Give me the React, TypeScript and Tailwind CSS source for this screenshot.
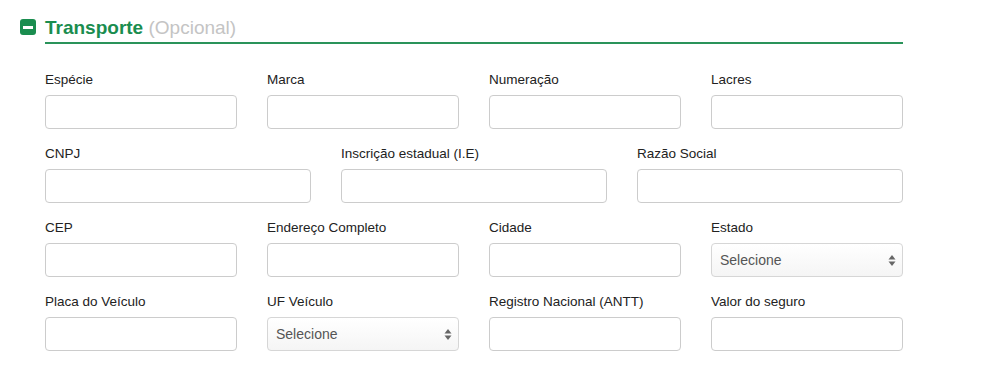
import React from "react";

interface Field {
  label: string;
  type?: "text" | "select";
}

const rows: Field[][] = [
  [{ label: "Espécie" }, { label: "Marca" }, { label: "Numeração" }, { label: "Lacres" }],
  [{ label: "CNPJ" }, { label: "Inscrição estadual (I.E)" }, { label: "Razão Social" }],
  [{ label: "CEP" }, { label: "Endereço Completo" }, { label: "Cidade" }, { label: "Estado", type: "select" }],
  [
    { label: "Placa do Veículo" },
    { label: "UF Veículo", type: "select" },
    { label: "Registro Nacional (ANTT)" },
    { label: "Valor do seguro" },
  ],
];

const SelectBox: React.FC = () => (
  <div className="relative h-[34px] rounded-[4px] border border-[#d6d6d6] bg-gradient-to-b from-[#ffffff] to-[#f5f5f5]">
    <span className="absolute left-[8px] top-[8px] text-[14px] leading-[17px] text-[#555]">Selecione</span>
    <svg className="absolute right-[6px] top-[10px]" width="8" height="13" viewBox="0 0 8 13">
      <path d="M4 1 L7.5 5.5 H0.5 Z" fill="#666" />
      <path d="M4 12 L7.5 7.5 H0.5 Z" fill="#666" />
    </svg>
  </div>
);

export default function App() {
  return (
    <div className="bg-white w-[986px] h-[376px] pt-[16px] text-[#333]" style={{ fontFamily: "'Liberation Sans', Arial, sans-serif" }}>
      <div className="flex items-center pl-[20px] h-[22px]">
        <div className="w-[16px] h-[16px] rounded-[3px] bg-[#1a8d4f] flex items-center justify-center">
          <div className="w-[10px] h-[3px] bg-white" />
        </div>
        <div className="ml-[9px] text-[19px] leading-[22px] mt-[1px]">
          <span className="font-bold text-[#1a8d4f]">Transporte</span>
          <span className="text-[#c4c4c4]"> (Opcional)</span>
        </div>
      </div>
      <div className="ml-[45px] w-[858px] h-[2px] bg-[#2a935a] mt-[4px]" />
      <div className="ml-[45px] w-[858px] mt-[27px] flex flex-col gap-[16px]">
        {rows.map((row, i) => (
          <div key={i} className={row.length === 4 ? "grid grid-cols-4 gap-[30px]" : "grid grid-cols-3 gap-[30px]"}>
            {row.map((f) => (
              <div key={f.label}>
                <div className="text-[13.5px] leading-[18px] mb-[6px] text-[#222]">{f.label}</div>
                {f.type === "select" ? (
                  <SelectBox />
                ) : (
                  <div className="h-[34px] rounded-[4px] border border-[#cccccc] bg-white" />
                )}
              </div>
            ))}
          </div>
        ))}
      </div>
    </div>
  );
}
